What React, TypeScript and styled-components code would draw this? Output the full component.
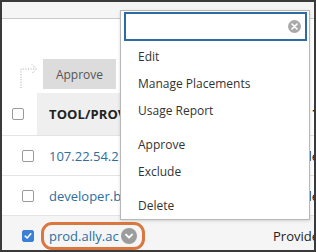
import React from "react";
import styled, { createGlobalStyle } from "styled-components";

const GlobalStyle = createGlobalStyle`
  html, body { margin: 0; padding: 0; background: #fff; }
  body { font-family: "Open Sans", "Liberation Sans", sans-serif; }
  * { box-sizing: border-box; }
`;

const Frame = styled.div`
  position: relative;
  width: 316px;
  height: 252px;
  border: 2px solid #3a3a3a;
  overflow: hidden;
  background: #fff;
`;

const TopBar = styled.div`
  height: 17px;
  background: #f5f5f5;
  border-bottom: 1px solid #cacaca;
`;

const ActionBar = styled.div`
  display: flex;
  align-items: flex-end;
  gap: 5px;
  padding: 36px 0 4px 14px;
`;

const ActionButton = styled.button`
  width: 73px;
  height: 30px;
  border: none;
  border-radius: 0;
  background: #dcdcdc;
  color: #555;
  font-family: "Open Sans", "Liberation Sans", sans-serif;
  font-size: 12px;
  padding: 0;
`;

const Row = styled.div<{ $header?: boolean; $selected?: boolean }>`
  display: grid;
  grid-template-columns: 35px 228px 1fr;
  height: ${(p) => (p.$header ? 43 : 40)}px;
  border-bottom: 1px solid #e4e4e4;
  background: ${(p) => (p.$selected ? "#f5f5f5" : "#fff")};
  white-space: nowrap;
`;

const CheckCell = styled.div<{ $inset: number }>`
  display: flex;
  align-items: center;
  padding-left: ${(p) => p.$inset}px;
`;

const Cell = styled.div<{ $shade?: boolean; $pad?: number }>`
  display: flex;
  align-items: center;
  padding-left: ${(p) => p.$pad ?? 12}px;
  overflow: hidden;
  background: ${(p) => (p.$shade ? "#efefef" : "transparent")};
`;

const HeadText = styled.span`
  font-size: 13px;
  font-weight: 700;
  color: #222;
  letter-spacing: 0.1px;
`;

const LinkText = styled.span`
  font-size: 13px;
  color: #2d6e9e;
`;

const PlainText = styled.span`
  font-size: 13px;
  color: #222;
`;

const Box = styled.span<{ $checked?: boolean }>`
  display: inline-flex;
  align-items: center;
  justify-content: center;
  width: 12px;
  height: 12px;
  border-radius: 2px;
  border: 1px solid ${(p) => (p.$checked ? "#3a80d6" : "#9a9a9a")};
  background: ${(p) => (p.$checked ? "#3a80d6" : "#fff")};
`;

const Highlight = styled.span`
  display: inline-flex;
  align-items: center;
  gap: 2px;
  margin-left: -8px;
  padding: 2px 5px 2px 5px;
  border: 3px solid #d9773f;
  border-radius: 11px;
`;

const Chevron = styled.span`
  display: inline-flex;
  align-items: center;
  justify-content: center;
  width: 16px;
  height: 16px;
  border-radius: 50%;
  background: #9c9c9c;
`;

const Menu = styled.div`
  position: absolute;
  left: 118px;
  top: 8px;
  width: 190px;
  padding: 1px 2px 0 3px;
  background: #fff;
  border: 1px solid #b8b8b8;
  box-shadow: 0 1px 3px rgba(0, 0, 0, 0.15);
`;

const Search = styled.div`
  display: flex;
  align-items: center;
  justify-content: flex-end;
  height: 29px;
  padding-right: 4px;
  border: 2px solid #2e6ba2;
`;

const Clear = styled.span`
  display: inline-flex;
  align-items: center;
  justify-content: center;
  width: 13px;
  height: 13px;
  border-radius: 50%;
  background: #a9a9a9;
`;

const Group = styled.div<{ $first?: boolean }>`
  margin-top: ${(p) => (p.$first ? 2 : 7)}px;
`;

const Item = styled.div`
  height: 27px;
  line-height: 27px;
  padding-left: 14px;
  font-size: 12px;
  color: #333;
`;

const Check = ({ checked }: { checked?: boolean }) => (
  <Box $checked={checked}>
    {checked && (
      <svg width="8" height="8" viewBox="0 0 8 8">
        <path d="M1.2 4.2 L3.2 6 L6.8 1.8" fill="none" stroke="#fff" strokeWidth="1.6" strokeLinecap="round" strokeLinejoin="round" />
      </svg>
    )}
  </Box>
);

const rows = [
  { name: "107.22.54.21", type: "Provider" },
  { name: "developer.blackboard.com", type: "Provider" },
];

export default function App() {
  return (
    <>
      <GlobalStyle />
      <Frame>
        <TopBar />
        <ActionBar>
          <svg width="22" height="34" viewBox="0 0 22 34">
            <path d="M5 33 V14 H19" fill="none" stroke="#a8a8a8" strokeWidth="1" strokeDasharray="1 1.6" />
            <path d="M16 9.5 L20.5 14 L16 18.5" fill="none" stroke="#a8a8a8" strokeWidth="1" strokeDasharray="1 1.2" />
          </svg>
          <ActionButton>Approve</ActionButton>
        </ActionBar>
        <Row $header>
          <CheckCell $inset={10}>
            <Check />
          </CheckCell>
          <Cell $shade>
            <HeadText>TOOL/PROVIDER</HeadText>
          </Cell>
          <Cell $pad={8}>
            <HeadText>TOOL TYPE</HeadText>
          </Cell>
        </Row>
        {rows.map((r) => (
          <Row key={r.name}>
            <CheckCell $inset={20}>
              <Check />
            </CheckCell>
            <Cell>
              <LinkText>{r.name}</LinkText>
            </Cell>
            <Cell $pad={8}>
              <PlainText>{r.type}</PlainText>
            </Cell>
          </Row>
        ))}
        <Row $selected>
          <CheckCell $inset={20}>
            <Check checked />
          </CheckCell>
          <Cell>
            <Highlight>
              <LinkText>prod.ally.ac</LinkText>
              <Chevron>
                <svg width="10" height="10" viewBox="0 0 10 10">
                  <path d="M2 3.6 L5 6.6 L8 3.6" fill="none" stroke="#fff" strokeWidth="2" strokeLinecap="round" strokeLinejoin="round" />
                </svg>
              </Chevron>
            </Highlight>
          </Cell>
          <Cell $pad={8}>
            <PlainText>Provider</PlainText>
          </Cell>
        </Row>
        <Menu>
          <Search>
            <Clear>
              <svg width="7" height="7" viewBox="0 0 7 7">
                <path d="M1 1 L6 6 M6 1 L1 6" stroke="#fff" strokeWidth="1.6" strokeLinecap="round" />
              </svg>
            </Clear>
          </Search>
          <Group $first>
            <Item>Edit</Item>
            <Item>Manage Placements</Item>
            <Item>Usage Report</Item>
          </Group>
          <Group>
            <Item>Approve</Item>
            <Item>Exclude</Item>
          </Group>
          <Group>
            <Item>Delete</Item>
          </Group>
        </Menu>
      </Frame>
    </>
  );
}
